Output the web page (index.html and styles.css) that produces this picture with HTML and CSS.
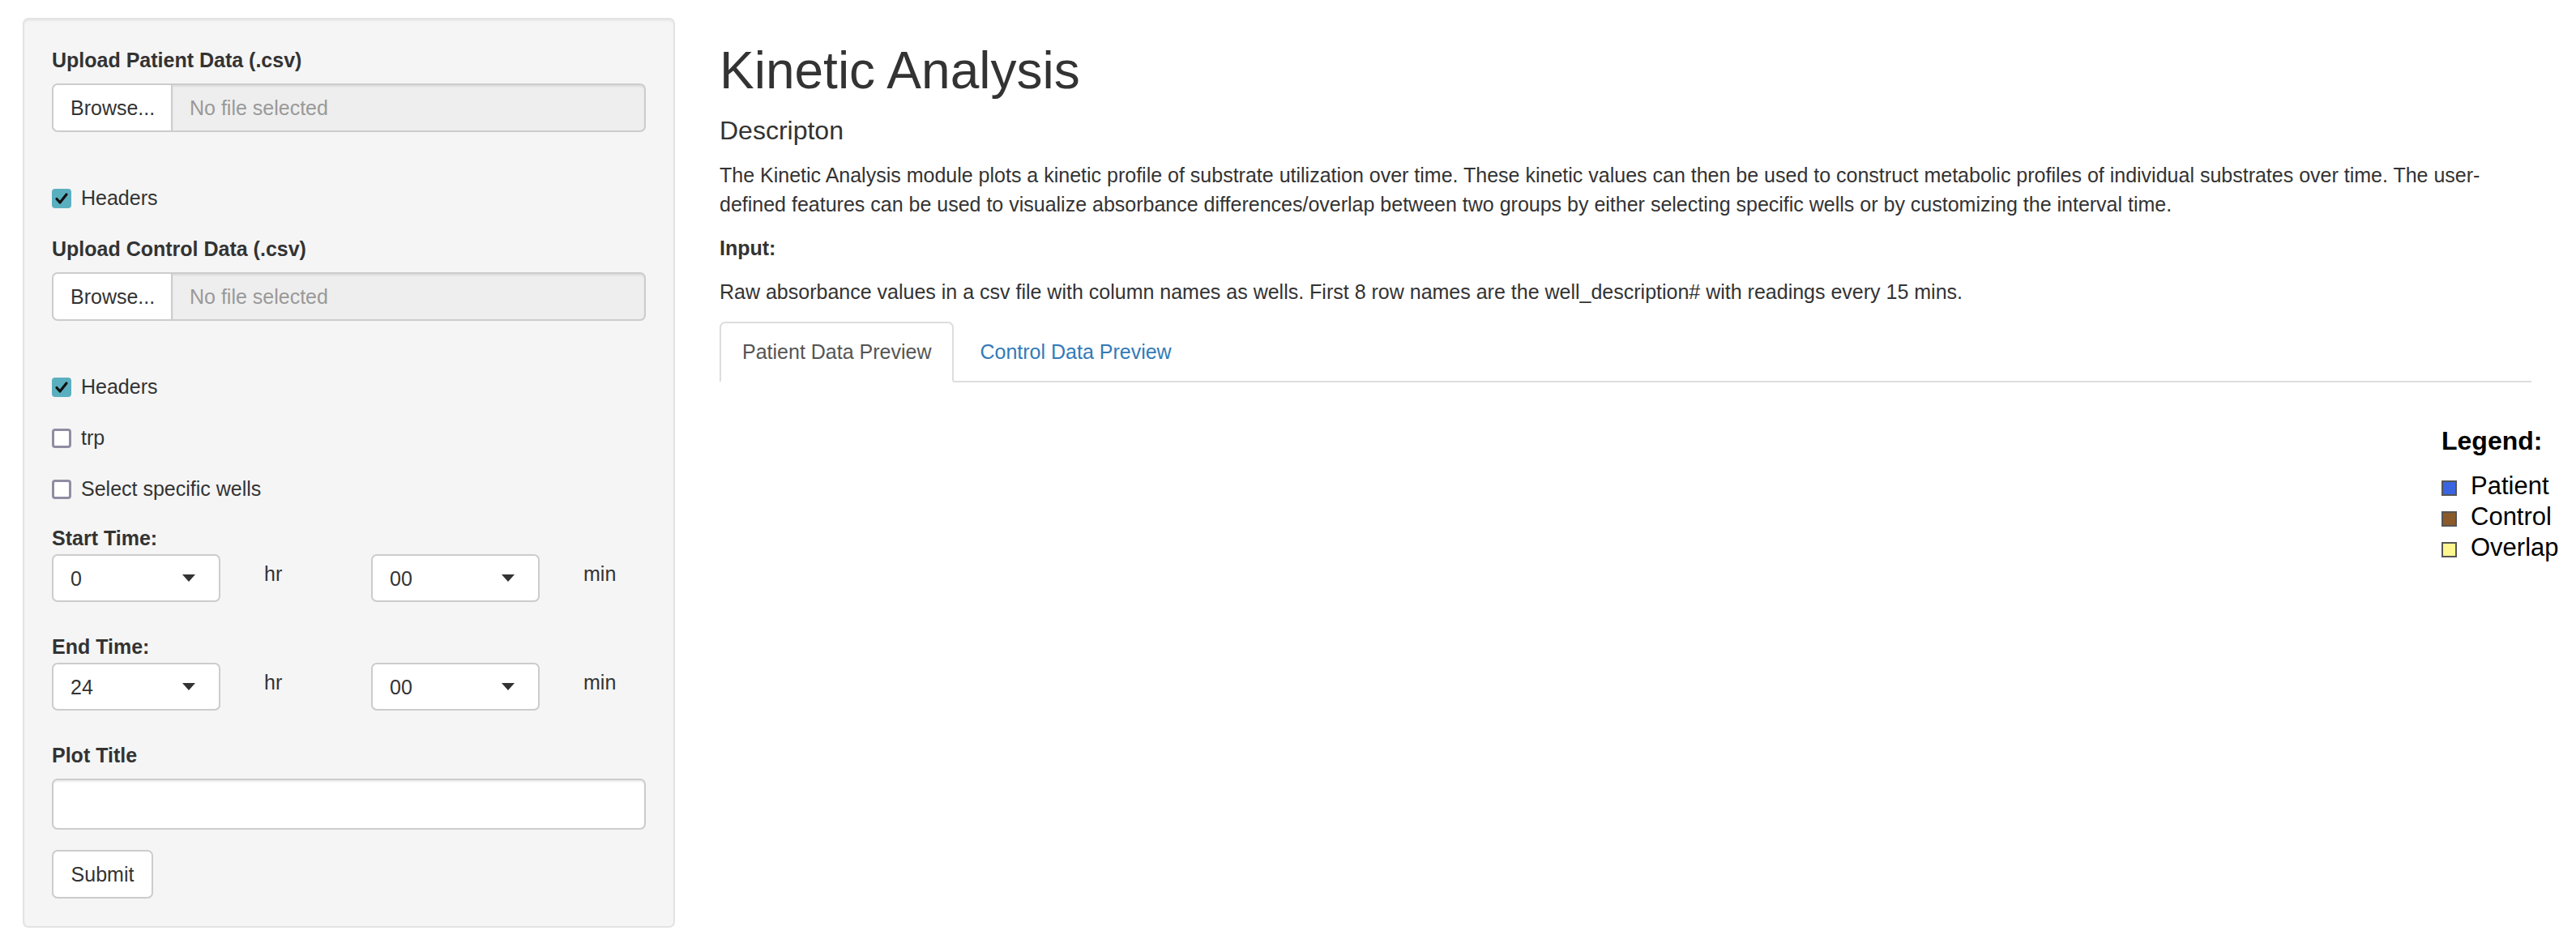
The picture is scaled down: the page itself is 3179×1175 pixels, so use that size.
FILE: index.html
```html
<!DOCTYPE html>
<html lang="en">
<head>
    <meta charset="UTF-8">
    <title>Kinetic Analysis</title>
    <link rel="stylesheet" href="styles.css">
</head>
<body>
<div class="page">
    <!-- Sidebar -->
    <div class="well">
        <div class="field-label">Upload Patient Data (.csv)</div>
        <div class="file-input">
            <span class="browse-btn">Browse...</span>
            <span class="file-name">No file selected</span>
        </div>
        <div class="check-row">
            <span class="box checked">
                <svg viewBox="0 0 24 24" width="24" height="24"><path d="M6 12.5l4 4.5 8-10" fill="none" stroke="#111" stroke-width="3.2" stroke-linecap="round" stroke-linejoin="round"/></svg>
            </span>
            <span>Headers</span>
        </div>

        <div class="field-label">Upload Control Data (.csv)</div>
        <div class="file-input">
            <span class="browse-btn">Browse...</span>
            <span class="file-name">No file selected</span>
        </div>
        <div class="check-row">
            <span class="box checked">
                <svg viewBox="0 0 24 24" width="24" height="24"><path d="M6 12.5l4 4.5 8-10" fill="none" stroke="#111" stroke-width="3.2" stroke-linecap="round" stroke-linejoin="round"/></svg>
            </span>
            <span>Headers</span>
        </div>
        <div class="check-row">
            <span class="box"></span>
            <span>trp</span>
        </div>
        <div class="check-row last">
            <span class="box"></span>
            <span>Select specific wells</span>
        </div>

        <div class="field-label tight">Start Time:</div>
        <div class="time-row">
            <div class="select"><span>0</span><span class="caret"></span></div>
            <div class="unit">hr</div>
            <div class="select"><span>00</span><span class="caret"></span></div>
            <div class="unit">min</div>
        </div>

        <div class="field-label tight">End Time:</div>
        <div class="time-row">
            <div class="select"><span>24</span><span class="caret"></span></div>
            <div class="unit">hr</div>
            <div class="select"><span>00</span><span class="caret"></span></div>
            <div class="unit">min</div>
        </div>

        <div class="field-label">Plot Title</div>
        <div class="text-input"></div>

        <button class="btn">Submit</button>
    </div>

    <!-- Main panel -->
    <div class="main">
        <h1>Kinetic Analysis</h1>
        <h4>Descripton</h4>
        <p>The Kinetic Analysis module plots a kinetic profile of substrate utilization over time. These kinetic values can then be used to construct metabolic profiles of individual substrates over time. The user-defined features can be used to visualize absorbance differences/overlap between two groups by either selecting specific wells or by customizing the interval time.</p>
        <p><strong>Input:</strong></p>
        <p>Raw absorbance values in a csv file with column names as wells. First 8 row names are the well_description# with readings every 15 mins.</p>
        <ul class="nav-tabs">
            <li class="active"><a>Patient Data Preview</a></li>
            <li><a>Control Data Preview</a></li>
        </ul>
    </div>
</div>

<!-- Legend -->
<div class="legend">
    <div class="legend-title">Legend:</div>
    <div class="legend-item"><span class="swatch patient"></span>Patient</div>
    <div class="legend-item"><span class="swatch control"></span>Control</div>
    <div class="legend-item"><span class="swatch overlap"></span>Overlap</div>
</div>
</body>
</html>
```

FILE: styles.css
```css
body {
    margin: 0;
    font-family: "Liberation Sans", Arial, sans-serif;
    font-size: 25px;
    line-height: 36px;
    color: #333;
    background: #fff;
}

.page {
    display: flex;
    align-items: flex-start;
    gap: 55px;
    padding: 22px 55px 0 28px;
}

/* sidebar */
.well {
    flex: none;
    width: 805px;
    box-sizing: border-box;
    padding: 32px 34px 34px;
    background-color: #f5f5f5;
    border: 2px solid #e3e3e3;
    border-radius: 7px;
    box-shadow: inset 0 2px 2px rgba(0, 0, 0, 0.05);
}

.field-label {
    font-weight: bold;
    margin-bottom: 11px;
}

.field-label.tight {
    margin-bottom: 2px;
}

.file-input {
    display: flex;
    height: 60px;
    margin-bottom: 63px;
}

.browse-btn {
    display: flex;
    align-items: center;
    width: 149px;
    box-sizing: border-box;
    padding-left: 21px;
    background: #fff;
    border: 2px solid #ccc;
    border-radius: 7px 0 0 7px;
}

.file-name {
    flex: 1;
    display: flex;
    align-items: center;
    padding-left: 21px;
    background: #eee;
    color: #999;
    border: 2px solid #ccc;
    border-left: none;
    border-radius: 0 7px 7px 0;
    box-shadow: inset 0 2px 2px rgba(0, 0, 0, 0.075);
}

.check-row {
    display: flex;
    gap: 12px;
    margin-bottom: 27px;
}

.check-row.last {
    margin-bottom: 25px;
}

.box {
    width: 24px;
    height: 24px;
    margin-top: 7px;
    box-sizing: border-box;
    border: 3px solid #8f8da2;
    border-radius: 4px;
    background: #fff;
}

.box.checked {
    border: none;
    background: #5aafbf;
}

.box svg {
    display: block;
}

.time-row {
    display: grid;
    grid-template-columns: 208px 186px 208px auto;
    margin-bottom: 37px;
}

.select {
    display: flex;
    align-items: center;
    justify-content: space-between;
    height: 59px;
    box-sizing: border-box;
    padding: 0 29px 0 21px;
    background: #fff;
    border: 2px solid #ccc;
    border-radius: 7px;
}

.caret {
    width: 0;
    height: 0;
    border-top: 9px solid #333;
    border-left: 8px solid transparent;
    border-right: 8px solid transparent;
}

.unit {
    padding: 6px 0 0 54px;
}

.text-input {
    height: 59px;
    background: #fff;
    border: 2px solid #ccc;
    border-radius: 7px;
    box-shadow: inset 0 2px 2px rgba(0, 0, 0, 0.075);
    margin-bottom: 25px;
}

.btn {
    display: block;
    width: 125px;
    height: 60px;
    padding: 0;
    font-family: inherit;
    font-size: 25px;
    color: #333;
    background: #fff;
    border: 2px solid #ccc;
    border-radius: 7px;
}

/* main panel */
.main {
    flex: 1;
}

h1 {
    font-size: 64px;
    font-weight: 500;
    line-height: 1.1;
    margin: 30px 0 22px;
}

h4 {
    font-size: 32px;
    font-weight: 500;
    line-height: 1.1;
    margin: 0 0 18px;
}

p {
    margin: 0 0 18px;
}

.nav-tabs {
    display: flex;
    list-style: none;
    margin: 19px 0 0;
    padding: 0;
    border-bottom: 2px solid #ddd;
}

.nav-tabs li {
    margin-bottom: -2px;
    margin-right: 4px;
}

.nav-tabs a {
    display: block;
    padding: 17px 26px 18px;
    color: #337ab7;
    border: 2px solid transparent;
    border-radius: 7px 7px 0 0;
}

.nav-tabs li.active a {
    color: #555;
    background: #fff;
    border-color: #ddd #ddd transparent;
}

/* legend over the plot area */
.legend {
    position: absolute;
    left: 3013px;
    top: 527px;
    color: #000;
    font-size: 31px;
    line-height: 38px;
}

.legend-title {
    font-size: 32px;
    font-weight: bold;
    line-height: 35px;
    margin-bottom: 19px;
}

.legend-item {
    display: flex;
    align-items: center;
    white-space: nowrap;
}

.swatch {
    width: 19px;
    height: 19px;
    box-sizing: border-box;
    border: 2px solid #555;
    margin-right: 17px;
    margin-top: 4px;
}

.swatch.patient { background: #3b64e0; }
.swatch.control { background: #8b5a2b; }
.swatch.overlap { background: #fff68f; }
```
